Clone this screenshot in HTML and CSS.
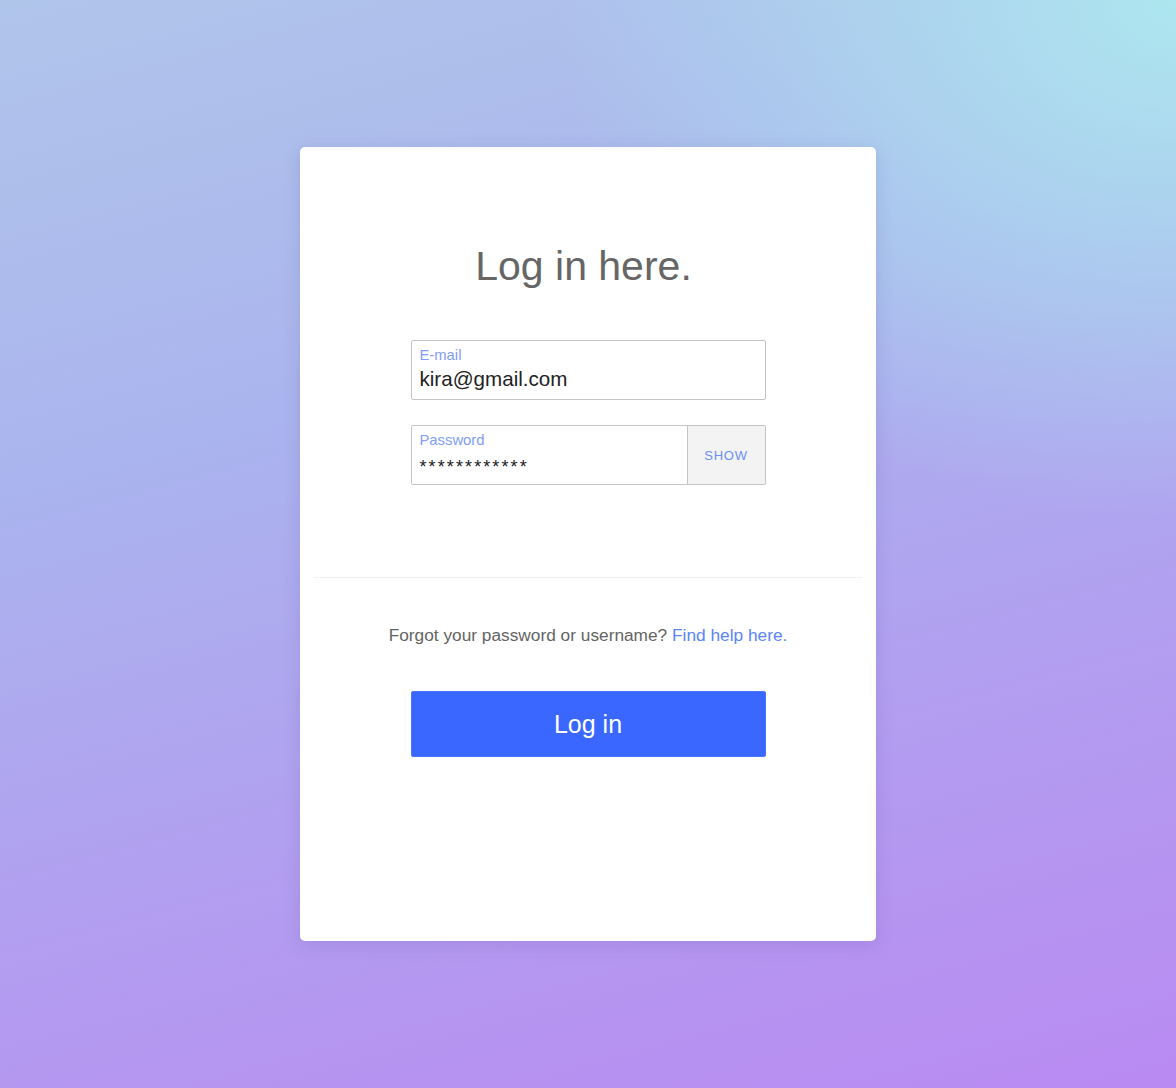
FILE: index.html
```html
<!DOCTYPE html>
<html lang="en">
<head>
<meta charset="utf-8">
<title>Log in</title>
<link rel="stylesheet" href="styles.css">
</head>
<body>
  <main class="page">
    <section class="card">
      <h1 class="title">Log in here.</h1>
      <div class="form">
        <div class="field">
          <div class="field-main">
            <span class="label">E-mail</span>
            <span class="value">kira@gmail.com</span>
          </div>
        </div>
        <div class="field field-pass">
          <div class="field-main">
            <span class="label">Password</span>
            <span class="value value-pass">************</span>
          </div>
          <button class="show" type="button">SHOW</button>
        </div>
      </div>
      <hr class="divider">
      <p class="help">Forgot your password or username? <a class="help-link" href="#">Find help here.</a></p>
      <button class="login" type="button">Log in</button>
    </section>
  </main>
</body>
</html>
```

FILE: styles.css
```css
* { box-sizing: border-box; }
html, body { margin: 0; padding: 0; }
body {
  min-height: 1088px;
  font-family: "Liberation Sans", Arial, sans-serif;
  background:
    radial-gradient(ellipse 620px 520px at 100% 0%, rgba(173, 230, 239, 1) 0%, rgba(173, 230, 239, 0) 100%),
    linear-gradient(165deg, #b0c5ea 0%, #aab4ee 35%, #b39bf0 72%, #b98af2 100%);
}
.page {
  display: flex;
  justify-content: center;
  padding-top: 147px;
}
.card {
  width: 576px;
  height: 794px;
  background: #fff;
  border-radius: 5px;
  box-shadow: 0 4px 18px rgba(80, 60, 150, 0.16);
  display: flex;
  flex-direction: column;
  align-items: center;
  padding: 95px 14px 0;
}
.title {
  margin: 0;
  font-weight: normal;
  font-size: 41px;
  line-height: 48px;
  color: #666;
  padding-right: 9px;
}
.form {
  margin-top: 50px;
  width: 355px;
  display: flex;
  flex-direction: column;
  gap: 25px;
}
.field {
  height: 60px;
  border: 1px solid #c4c4c4;
  border-radius: 2px;
  display: flex;
}
.field-main {
  flex: 1;
  display: flex;
  flex-direction: column;
  padding: 6px 8px 0;
}
.label {
  font-size: 14.8px;
  line-height: 16px;
  color: #7f9ef6;
}
.value {
  margin-top: 4px;
  font-size: 20.6px;
  line-height: 24px;
  color: #222;
}
.value-pass {
  font-size: 18px;
  letter-spacing: 2.1px;
  margin-top: 9px;
  line-height: 20px;
}
.show {
  width: 78px;
  border: 0;
  border-left: 1px solid #c4c4c4;
  background: #f3f3f3;
  font-family: inherit;
  font-size: 13px;
  letter-spacing: 0.8px;
  color: #6d8ff7;
  padding: 0;
  margin: 0;
  border-radius: 0 2px 2px 0;
}
.divider {
  width: 100%;
  margin: 92px 0 0;
  border: 0;
  border-top: 1px solid #f0f0f0;
  height: 0;
}
.help {
  margin: 47px 0 0;
  font-size: 17.3px;
  line-height: 20px;
  color: #646464;
}
.help-link {
  color: #5b86f7;
  text-decoration: none;
}
.login {
  margin-top: 46px;
  width: 355px;
  height: 66px;
  border: 1px solid #4a74ff;
  border-radius: 2px;
  background: #3967ff;
  color: #fff;
  font-family: inherit;
  font-size: 25px;
  padding: 0;
}
```
